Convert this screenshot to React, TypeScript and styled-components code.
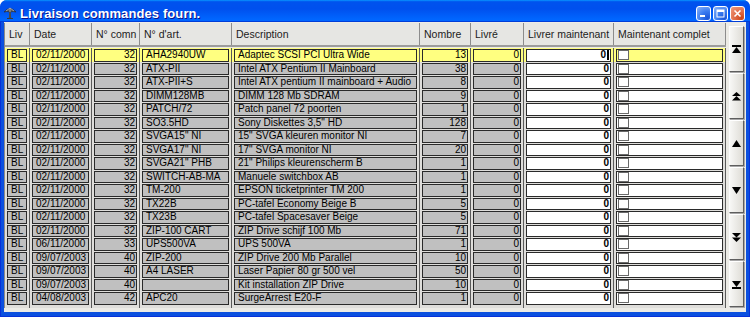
import styled, { createGlobalStyle } from 'styled-components'

const YELLOW = '#ffff80'
const GRAY = '#c0c0c0'
const SEP = '#5a5a5a'
const COLS = '25px 62px 48px 92px 188px 51px 53px 90px 112px'

type Line = {
  liv: string,
  date: string,
  comn: string,
  art: string,
  desc: string,
  nombre: string,
}

const LINES: Line[] = [
  { liv: 'BL', date: '02/11/2000', comn: '32', art: 'AHA2940UW', desc: 'Adaptec SCSI PCI Ultra Wide', nombre: '13' },
  { liv: 'BL', date: '02/11/2000', comn: '32', art: 'ATX-PII', desc: 'Intel ATX Pentium II Mainboard', nombre: '38' },
  { liv: 'BL', date: '02/11/2000', comn: '32', art: 'ATX-PII+S', desc: 'Intel ATX pentium II mainboard + Audio', nombre: '8' },
  { liv: 'BL', date: '02/11/2000', comn: '32', art: 'DIMM128MB', desc: 'DIMM 128 Mb SDRAM', nombre: '9' },
  { liv: 'BL', date: '02/11/2000', comn: '32', art: 'PATCH/72', desc: 'Patch panel 72 poorten', nombre: '1' },
  { liv: 'BL', date: '02/11/2000', comn: '32', art: 'SO3.5HD', desc: 'Sony Diskettes 3,5" HD', nombre: '128' },
  { liv: 'BL', date: '02/11/2000', comn: '32', art: 'SVGA15" NI', desc: '15" SVGA kleuren monitor NI', nombre: '7' },
  { liv: 'BL', date: '02/11/2000', comn: '32', art: 'SVGA17" NI', desc: '17" SVGA monitor NI', nombre: '20' },
  { liv: 'BL', date: '02/11/2000', comn: '32', art: 'SVGA21" PHB', desc: '21" Philips kleurenscherm B', nombre: '1' },
  { liv: 'BL', date: '02/11/2000', comn: '32', art: 'SWITCH-AB-MA', desc: 'Manuele switchbox AB', nombre: '1' },
  { liv: 'BL', date: '02/11/2000', comn: '32', art: 'TM-200', desc: 'EPSON ticketprinter TM 200', nombre: '1' },
  { liv: 'BL', date: '02/11/2000', comn: '32', art: 'TX22B', desc: 'PC-tafel Economy Beige B', nombre: '5' },
  { liv: 'BL', date: '02/11/2000', comn: '32', art: 'TX23B', desc: 'PC-tafel Spacesaver Beige', nombre: '5' },
  { liv: 'BL', date: '02/11/2000', comn: '32', art: 'ZIP-100 CART', desc: 'ZIP Drive schijf 100 Mb', nombre: '71' },
  { liv: 'BL', date: '06/11/2000', comn: '33', art: 'UPS500VA', desc: 'UPS 500VA', nombre: '1' },
  { liv: 'BL', date: '09/07/2003', comn: '40', art: 'ZIP-200', desc: 'ZIP Drive 200 Mb Parallel', nombre: '10' },
  { liv: 'BL', date: '09/07/2003', comn: '40', art: 'A4 LASER', desc: 'Laser Papier 80 gr 500 vel', nombre: '50' },
  { liv: 'BL', date: '09/07/2003', comn: '40', art: '', desc: 'Kit installation ZIP Drive', nombre: '10' },
  { liv: 'BL', date: '04/08/2003', comn: '42', art: 'APC20', desc: 'SurgeArrest E20-F', nombre: '1' },
]

const HEADERS = ['Liv', 'Date', 'N° comn', "N° d'art.", 'Description', 'Nombre', 'Livré', 'Livrer maintenant', 'Maintenant complet']

const GlobalStyle = createGlobalStyle`
  html, body {
    margin: 0;
    padding: 0;
    background: #ffffff;
  }
  body {
    font-family: "Liberation Sans", Arial, sans-serif;
  }
`

const Window = styled.div`
  width: 750px;
  height: 317px;
  display: flex;
  flex-direction: column;
  overflow: hidden;
  border-radius: 7px 7px 0 0;
  background: #0b50df;
`

const TitleBar = styled.div`
  height: 22px;
  flex-shrink: 0;
  box-sizing: border-box;
  display: flex;
  align-items: center;
  padding: 4px 5px 0 3px;
  background: linear-gradient(to bottom, #0997ff 0%, #0053ee 8%, #0050ee 40%, #0066ff 88%, #0066ff 93%, #005bff 95%, #003dd7 96%, #003dd7 100%);
`

const Title = styled.div`
  flex: 1;
  margin-left: 3px;
  color: #ffffff;
  font-weight: bold;
  font-size: 13px;
  letter-spacing: 0.1px;
  text-shadow: 1px 1px 0 #0f1089;
  white-space: nowrap;
`

const TitleButton = styled.div<{ $close?: boolean }>`
  width: 15px;
  height: 15px;
  box-sizing: border-box;
  margin-left: 2px;
  border: 1px solid #ffffff;
  border-radius: 3px;
  display: flex;
  align-items: center;
  justify-content: center;
  background: ${p => p.$close
    ? 'radial-gradient(circle at 80% 85%, #cc4619 0%, #df6a45 40%, #f09c7f 100%)'
    : 'radial-gradient(circle at 80% 85%, #1b56d8 0%, #3b7cf0 45%, #8db5f8 100%)'};
`

const Frame = styled.div`
  flex: 1;
  display: flex;
  padding: 0 4px 5px 4px;
  box-shadow: inset 1px 0 #0831d9, inset -1px 0 #0831d9, inset 0 -1px #0831d9;
`

const Client = styled.div`
  flex: 1;
  display: flex;
  background: #ecebe6;
  padding-top: 1px;
`

const Table = styled.div`
  width: 722px;
  box-sizing: border-box;
  border-left: 1px solid #8a8a8a;
  align-self: flex-start;
`

const HeaderRow = styled.div`
  display: grid;
  grid-template-columns: ${COLS};
  height: 24px;
  box-sizing: border-box;
  border-bottom: 2px solid #9c9c9c;
  background: #e6e6e3;
`

const HeaderCell = styled.div`
  border-right: 1px solid #8c8c8c;
  padding-left: 4px;
  display: flex;
  align-items: center;
  font-size: 10.5px;
  color: #1c1c1c;
  white-space: nowrap;
  overflow: hidden;
`

const Rows = styled.div`
  padding-top: 1px;
`

const Row = styled.div<{ $selected?: boolean, $height?: number }>`
  display: grid;
  grid-template-columns: ${COLS};
  height: ${p => p.$height ?? 13.5}px;
  background: ${p => p.$selected ? YELLOW : '#dfdedb'};
`

const Col = styled.div`
  border-right: 1px solid ${SEP};
  padding: 1px 2px 0 2px;
  box-sizing: border-box;
  min-width: 0;
`

const Cell = styled.div<{ $bg: string, $right?: boolean, $bold?: boolean }>`
  height: 100%;
  box-sizing: border-box;
  border: 1px solid #2a2a2a;
  background: ${p => p.$bg};
  padding: ${p => p.$right ? '0 1px 0 2px' : '0 2px 0 3px'};
  font-size: 10px;
  line-height: 10.5px;
  font-weight: ${p => p.$bold ? 'bold' : 'normal'};
  text-align: ${p => p.$right ? 'right' : 'left'};
  color: #000000;
  white-space: nowrap;
  overflow: hidden;
`

const Caret = styled.span`
  display: inline-block;
  width: 2px;
  height: 10px;
  margin-left: 1px;
  vertical-align: top;
  background: #000000;
`

const CheckCell = styled.div<{ $bg: string }>`
  height: 100%;
  box-sizing: border-box;
  border: 1px solid #2a2a2a;
  background: ${p => p.$bg};
  display: flex;
  align-items: center;
  padding-left: 1px;
`

const CheckBox = styled.div`
  width: 11px;
  height: 10px;
  box-sizing: border-box;
  border: 1px solid #6a6a6a;
  background: #ffffff;
`

const NavColumn = styled.div`
  display: flex;
  flex-direction: column;
  gap: 1px;
  padding: 3px 0 0 3px;
`

const NavButton = styled.div`
  width: 15px;
  height: 46px;
  box-sizing: border-box;
  border: 1px solid;
  border-color: #ffffff #5e5e5e #5e5e5e #fbfbfb;
  box-shadow: 1px 1px 0 #a8a8a8;
  background: linear-gradient(to right, #f7f7f5, #dedcd6);
  display: flex;
  align-items: center;
  justify-content: center;
`

const AppIcon = () => (
  <svg width="14" height="14" viewBox="0 0 14 14">
    <path d="M1 6 Q7 -1 13 6 Q10 5 7 6 Q4 5 1 6 Z" fill="#5b5b5b" stroke="#2a2a2a" strokeWidth="0.6" />
    <path d="M3 5 L7 2 L11 5 M7 2 L7 6" stroke="#b9b9b9" strokeWidth="0.8" fill="none" />
    <path d="M6.2 6 L7.8 6 L8.2 12 L5.8 12 Z" fill="#4a4a4a" />
    <path d="M4 12.5 L10 12.5" stroke="#3a3a3a" strokeWidth="1.2" />
  </svg>
)

const NavIcon = ({ kind }: { kind: 'first' | 'pageUp' | 'up' | 'down' | 'pageDown' | 'last' }) => {
  const shapes = {
    first: <><rect x="0" y="0" width="9" height="2" /><polygon points="4.5,2 9,8 0,8" /></>,
    pageUp: <><polygon points="4.5,0 9,4 0,4" /><polygon points="4.5,4 9,8.5 0,8.5" /></>,
    up: <polygon points="4.5,1 9,8 0,8" />,
    down: <polygon points="0,1 9,1 4.5,8" />,
    pageDown: <><polygon points="0,0 9,0 4.5,4.5" /><polygon points="0,4.5 9,4.5 4.5,9" /></>,
    last: <><polygon points="0,1 9,1 4.5,7" /><rect x="0" y="7" width="9" height="2" /></>,
  }
  return (
    <svg width="9" height="9" viewBox="0 0 9 9" fill="#000000">
      {shapes[kind]}
    </svg>
  )
}

const NAV: ('first' | 'pageUp' | 'up' | 'down' | 'pageDown' | 'last')[] = ['first', 'pageUp', 'up', 'down', 'pageDown', 'last']

const App = () => {
  return (
    <>
      <GlobalStyle />
      <Window>
        <TitleBar>
          <AppIcon />
          <Title>Livraison commandes fourn.</Title>
          <TitleButton>
            <svg width="9" height="9" viewBox="0 0 9 9"><rect x="1" y="6" width="5" height="2" fill="#ffffff" /></svg>
          </TitleButton>
          <TitleButton>
            <svg width="9" height="9" viewBox="0 0 9 9"><rect x="1" y="1" width="7" height="7" fill="none" stroke="#ffffff" strokeWidth="1" /><rect x="1" y="1" width="7" height="2" fill="#ffffff" /></svg>
          </TitleButton>
          <TitleButton $close>
            <svg width="9" height="9" viewBox="0 0 9 9"><path d="M1.5 1.5 L7.5 7.5 M7.5 1.5 L1.5 7.5" stroke="#ffffff" strokeWidth="1.6" /></svg>
          </TitleButton>
        </TitleBar>
        <Frame>
          <Client>
            <Table>
              <HeaderRow>
                {HEADERS.map(h => <HeaderCell key={h}>{h}</HeaderCell>)}
              </HeaderRow>
              <Rows>
                {LINES.map((l, i) => {
                  const sel = i === 0
                  const bg = sel ? YELLOW : GRAY
                  return (
                    <Row key={i} $selected={sel}>
                      <Col><Cell $bg={bg}>{l.liv}</Cell></Col>
                      <Col><Cell $bg={bg}>{l.date}</Cell></Col>
                      <Col><Cell $bg={bg} $right>{l.comn}</Cell></Col>
                      <Col><Cell $bg={bg}>{l.art}</Cell></Col>
                      <Col><Cell $bg={bg}>{l.desc}</Cell></Col>
                      <Col><Cell $bg={bg} $right>{l.nombre}</Cell></Col>
                      <Col><Cell $bg={bg} $right>0</Cell></Col>
                      <Col>
                        <Cell $bg="#ffffff" $right $bold>0{sel && <Caret />}</Cell>
                      </Col>
                      <Col>
                        <CheckCell $bg={sel ? YELLOW : '#ffffff'}><CheckBox /></CheckCell>
                      </Col>
                    </Row>
                  )
                })}
                <Row $height={3}>
                  {HEADERS.map(h => <Col key={h} />)}
                </Row>
              </Rows>
            </Table>
            <NavColumn>
              {NAV.map(k => (
                <NavButton key={k}><NavIcon kind={k} /></NavButton>
              ))}
            </NavColumn>
          </Client>
        </Frame>
      </Window>
    </>
  )
}

export default App
